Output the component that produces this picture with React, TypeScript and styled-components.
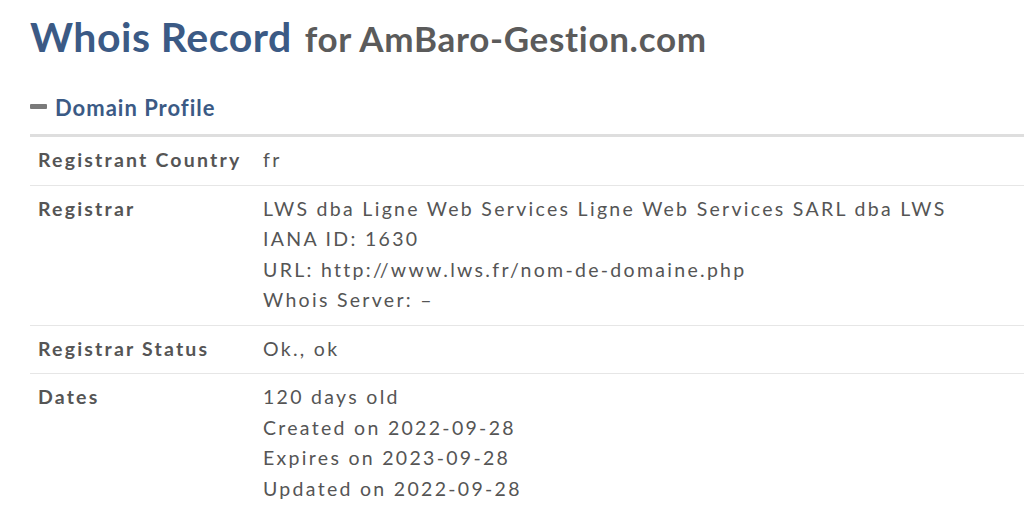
import React from "react";
import styled, { createGlobalStyle } from "styled-components";

const Global = createGlobalStyle`
  html, body { margin: 0; padding: 0; background: #fff; }
  body { font-family: Lato, "Open Sans", sans-serif; }
`;

const Page = styled.div`
  padding: 12px 0 0 30px;
  overflow: hidden;
  width: 1024px;
  box-sizing: border-box;
`;

const Title = styled.h1`
  margin: 0;
  font-size: 41px;
  line-height: 50px;
  font-weight: 700;
  letter-spacing: 0.5px;
  color: #3b5a85;
  white-space: nowrap;
`;

const Sub = styled.span`
  font-size: 35px;
  font-weight: 700;
  letter-spacing: 0.7px;
  color: #5b5b5b;
  margin-left: 13px;
`;

const SectionHead = styled.h2`
  margin: 30px 0 0;
  display: flex;
  align-items: center;
  gap: 8px;
  font-size: 22px;
  font-weight: 700;
  letter-spacing: 1px;
  color: #3b5a85;
  line-height: 30px;
  padding-bottom: 11px;
  border-bottom: 3px solid #dedede;
`;

const Minus = styled.span`
  display: inline-block;
  width: 17px;
  height: 5px;
  border-radius: 1px;
  background: #7a7a7a;
  margin-top: -3px;
`;

const Table = styled.div`
  display: flex;
  flex-direction: column;
`;

const Row = styled.div`
  display: grid;
  grid-template-columns: 225px 1fr;
  padding: 8px 8px 9px 8px;
  border-bottom: 1px solid #e6e6e6;
  font-size: 19.5px;
  line-height: 30.5px;
  letter-spacing: 2.3px;
  color: #555;
  &:last-child {
    padding-bottom: 20px;
  }
`;

const Label = styled.div`
  font-weight: 700;
  letter-spacing: 2.2px;
  white-space: nowrap;
`;

const Value = styled.div`
  font-weight: 400;
  white-space: nowrap;
`;

const rows: { label: string; lines: string[] }[] = [
  { label: "Registrant Country", lines: ["fr"] },
  {
    label: "Registrar",
    lines: [
      "LWS dba Ligne Web Services Ligne Web Services SARL dba LWS",
      "IANA ID: 1630",
      "URL: http://www.lws.fr/nom-de-domaine.php",
      "Whois Server: \u2013",
    ],
  },
  { label: "Registrar Status", lines: ["Ok., ok"] },
  {
    label: "Dates",
    lines: [
      "120 days old",
      "Created on 2022-09-28",
      "Expires on 2023-09-28",
      "Updated on 2022-09-28",
    ],
  },
];

export default function App() {
  return (
    <Page>
      <Global />
      <Title>
        Whois Record<Sub>for AmBaro-Gestion.com</Sub>
      </Title>
      <SectionHead>
        <Minus />
        Domain Profile
      </SectionHead>
      <Table>
        {rows.map((r) => (
          <Row key={r.label}>
            <Label>{r.label}</Label>
            <Value>
              {r.lines.map((l) => (
                <div key={l}>{l}</div>
              ))}
            </Value>
          </Row>
        ))}
      </Table>
    </Page>
  );
}
